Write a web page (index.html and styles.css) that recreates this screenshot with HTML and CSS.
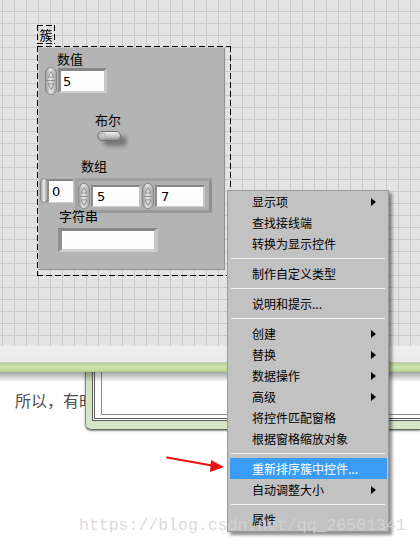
FILE: index.html
```html
<!DOCTYPE html>
<html lang="zh">
<head>
<meta charset="utf-8">
<title>LabVIEW 簇</title>
<link rel="stylesheet" href="styles.css">
</head>
<body>
<div class="front">
  <div class="cluster-label dashed">簇</div>
  <div class="cluster dashed">
    <div class="panel">
      <div class="lbl lbl-num">数值</div>
      <div class="spin spin-num"><svg viewBox="0 0 10 26" class="spin-ic"><polygon points="5,3.5 8,9.5 2,9.5" /><line x1="0.5" y1="13" x2="9.5" y2="13" /><polygon points="2,16.5 8,16.5 5,22.5" /></svg></div>
      <div class="numbox numbox-num"><span>5</span></div>

      <div class="lbl lbl-bool">布尔</div>
      <div class="toggle"><span class="knob"></span></div>

      <div class="lbl lbl-arr">数组</div>
      <div class="spin spin-idx"></div>
      <div class="numbox idxbox"><span>0</span></div>
      <div class="array">
        <div class="spin"><svg viewBox="0 0 10 26" class="spin-ic"><polygon points="5,3.5 8,9.5 2,9.5" /><line x1="0.5" y1="13" x2="9.5" y2="13" /><polygon points="2,16.5 8,16.5 5,22.5" /></svg></div>
        <div class="numbox elbox"><span>5</span></div>
        <div class="spin"><svg viewBox="0 0 10 26" class="spin-ic"><polygon points="5,3.5 8,9.5 2,9.5" /><line x1="0.5" y1="13" x2="9.5" y2="13" /><polygon points="2,16.5 8,16.5 5,22.5" /></svg></div>
        <div class="numbox elbox"><span>7</span></div>
      </div>

      <div class="lbl lbl-str">字符串</div>
      <div class="numbox strbox"></div>
    </div>
  </div>
</div>
<div class="strip"></div>
<div class="band"></div>
<div class="content">
  <div class="para">所以，有时候我们需要</div>
  <div class="dialog">
    <div class="dialog-frame">
      <div class="dialog-inner"></div>
    </div>
  </div>
</div>

<div class="menu">
  <div class="item"><span>显示项</span><span class="sub"></span></div>
  <div class="item"><span>查找接线端</span></div>
  <div class="item"><span>转换为显示控件</span></div>
  <div class="sep"></div>
  <div class="item"><span>制作自定义类型</span></div>
  <div class="sep"></div>
  <div class="item"><span>说明和提示...</span></div>
  <div class="sep"></div>
  <div class="item"><span>创建</span><span class="sub"></span></div>
  <div class="item"><span>替换</span><span class="sub"></span></div>
  <div class="item"><span>数据操作</span><span class="sub"></span></div>
  <div class="item"><span>高级</span><span class="sub"></span></div>
  <div class="item"><span>将控件匹配窗格</span></div>
  <div class="item"><span>根据窗格缩放对象</span></div>
  <div class="sep"></div>
  <div class="item active"><span>重新排序簇中控件...</span></div>
  <div class="item"><span>自动调整大小</span><span class="sub"></span></div>
  <div class="sep"></div>
  <div class="item"><span>属性</span></div>
</div>

<svg class="arrow" viewBox="0 0 70 30" width="70" height="30">
  <line x1="7" y1="7.5" x2="52" y2="15.5" stroke="#ee1111" stroke-width="2" stroke-linecap="round"/>
  <polygon points="64,17 51,10 50,22" fill="#ee1111"/>
</svg>

<div class="watermark">https://blog.csdn.net/qq_26501341</div>
</body>
</html>
```
FILE: styles.css
```css
html, body {
  margin: 0;
  padding: 0;
}
body {
  width: 420px;
  height: 546px;
  overflow: hidden;
  position: relative;
  background: #fff;
  font-family: "Noto Sans CJK SC", "Noto Sans", sans-serif;
}

/* front panel grid */
.front {
  height: 346px;
  position: relative;
  background-color: #e3e3e3;
  background-image:
    linear-gradient(to right, #c9c9c9 1px, transparent 1px),
    linear-gradient(to bottom, #c9c9c9 1px, transparent 1px);
  background-size: 12px 12px;
  background-position: 2px 11px;
}

.dashed {
  background:
    repeating-linear-gradient(90deg, #000 0 6px, transparent 6px 9px) 0 0 / 100% 1px no-repeat,
    repeating-linear-gradient(90deg, #000 0 6px, transparent 6px 9px) 0 100% / 100% 1px no-repeat,
    repeating-linear-gradient(180deg, #000 0 6px, transparent 6px 9px) 0 0 / 1px 100% no-repeat,
    repeating-linear-gradient(180deg, #000 0 6px, transparent 6px 9px) 100% 0 / 1px 100% no-repeat;
}

.cluster-label {
  position: absolute;
  left: 37px;
  top: 25px;
  width: 18px;
  height: 19px;
  font-size: 13px;
  line-height: 19px;
  text-align: center;
  color: #000;
}

.cluster {
  position: absolute;
  left: 37px;
  top: 46px;
  width: 194px;
  height: 230px;
}

.panel {
  margin: 1px 0 0 1px;
  width: 187px;
  height: 223px;
  box-sizing: border-box;
  position: relative;
  background: #b4b4b4;
  border: 1px solid;
  border-color: #cbcbcb #909090 #909090 #cbcbcb;
}

.lbl {
  position: absolute;
  font-size: 13px;
  line-height: 15px;
  color: #000;
  white-space: nowrap;
}
.lbl-num { left: 18px; top: 3px; }
.lbl-bool { left: 56px; top: 64px; }
.lbl-arr { left: 42px; top: 110px; }
.lbl-str { left: 20px; top: 160px; }

/* spinner (increment / decrement) */
.spin {
  width: 12px;
  height: 27px;
  box-sizing: border-box;
  border: 1px solid #8a8a8a;
  border-radius: 6px;
  background: linear-gradient(to right, #9e9e9e, #e9e9e9 45%, #c9c9c9 70%, #a3a3a3);
  position: relative;
  flex: none;
}
.spin-ic {
  display: block;
  width: 10px;
  height: 25px;
}
.spin-ic polygon {
  fill: #dedede;
  stroke: #7a7a7a;
  stroke-width: 0.8;
}
.spin-ic line {
  stroke: #8c8c8c;
  stroke-width: 1;
}
.spin-num {
  position: absolute;
  left: 6px;
  top: 19px;
  height: 28px;
}
.spin-idx {
  position: absolute;
  left: 1px;
  top: 130px;
  width: 8px;
  height: 25px;
  border-radius: 4px;
}

/* numeric / string boxes */
.numbox {
  box-sizing: border-box;
  background: #fdfdfd;
  border-style: solid;
  border-width: 3px 3px 2px 3px;
  border-color: #868686 #c6c6c6 #cfcfcf #8e8e8e;
  display: flex;
  align-items: center;
  font-family: "DejaVu Sans", "Liberation Sans", sans-serif;
  font-size: 13px;
  color: #000;
  padding-left: 2px;
  flex: none;
}
.numbox-num {
  position: absolute;
  left: 19px;
  top: 20px;
  width: 49px;
  height: 25px;
}
.idxbox {
  position: absolute;
  left: 8px;
  top: 131px;
  width: 27px;
  height: 24px;
  border-width: 2px 1px 1px 2px;
  padding-left: 3px;
}
.elbox {
  width: 50px;
  height: 22px;
  border-width: 2px 2px 1px 2px;
  padding-left: 4px;
}
.strbox {
  position: absolute;
  left: 19px;
  top: 180px;
  width: 100px;
  height: 24px;
  border-width: 3px 4px 3px 4px;
}

/* array shell */
.array {
  position: absolute;
  left: 36px;
  top: 130px;
  width: 137px;
  height: 35px;
  box-sizing: border-box;
  border: 3px solid;
  border-color: #a0a0a0 #8f8f8f #9a9a9a #a3a3a3;
  background: #b0b0b0;
  display: flex;
  align-items: center;
  gap: 1px;
}
.array .spin {
  height: 26px;
}

/* boolean toggle */
.toggle {
  position: absolute;
  left: 58px;
  top: 83px;
  width: 24px;
  height: 10px;
  box-sizing: border-box;
  border: 1px solid #6f6f6f;
  border-radius: 5px;
  background: linear-gradient(to bottom, #f2f2f2, #c9c9c9 50%, #8f8f8f);
  box-shadow: 6px 5px 4px rgba(0, 0, 0, 0.35);
}
.knob {
  position: absolute;
  left: 0;
  top: 0;
  width: 8px;
  height: 8px;
  border-radius: 50%;
  background: radial-gradient(circle at 60% 40%, #d8d8d8, #8a8a8a);
}

/* lower page */
.strip {
  height: 16px;
  background: linear-gradient(#efefef, #eaeaea);
  border-bottom: 1px solid #c6c6c6;
}
.band {
  height: 9px;
  background: linear-gradient(#b6d08a, #cfe3b1 45%, #c4dca0 75%, #b3cd88);
}
.content {
  position: relative;
  display: flex;
  height: 174px;
  background: #fff;
}
.content::after {
  content: "";
  position: absolute;
  left: 0;
  top: 0;
  right: 0;
  height: 10px;
  background: linear-gradient(rgba(0, 0, 0, 0.36), rgba(0, 0, 0, 0));
  pointer-events: none;
}
.para {
  width: 85px;
  flex: none;
  box-sizing: border-box;
  overflow: hidden;
  white-space: nowrap;
  padding: 19px 0 0 15px;
  font-size: 16px;
  line-height: 18px;
  color: #4d4d4d;
}
.dialog {
  flex: 1;
  height: 58px;
  box-sizing: border-box;
  border-left: 1px solid #7f8c76;
  border-bottom: 1px solid #5f665a;
  border-bottom-left-radius: 6px;
  background: linear-gradient(to bottom, #d2e1bd, #d9e6c9);
  padding: 0 0 8px 6px;
  box-shadow: 0 1px 2px rgba(0, 0, 0, 0.45);
}
.dialog-frame {
  height: 100%;
  box-sizing: border-box;
  border-left: 3px double #5a5a5a;
  border-bottom: 3px double #5a5a5a;
  background: #fff;
  padding: 0 0 3px 6px;
}
.dialog-inner {
  height: 100%;
  box-sizing: border-box;
  border-left: 1px solid #8a8a8a;
  border-bottom: 1px solid #8a8a8a;
}

/* context menu */
.menu {
  position: absolute;
  left: 227px;
  top: 190px;
  width: 162px;
  box-sizing: border-box;
  padding: 0 1px 1px 2px;
  background: #c2c2c2;
  border: 1px solid #9a9a9a;
  box-shadow: 3px 3px 3px rgba(0, 0, 0, 0.45);
  z-index: 3;
  font-size: 12px;
  color: #000;
}
.item {
  height: 21px;
  display: flex;
  align-items: center;
  justify-content: space-between;
  padding: 0 11px 0 22px;
  white-space: nowrap;
}
.item.active {
  background: #3b9cf5;
  color: #fff;
}
.sub {
  width: 0;
  height: 0;
  border-top: 4px solid transparent;
  border-bottom: 4px solid transparent;
  border-left: 5px solid #000;
}
.sep {
  height: 1px;
  margin: 4px 2px 4px 1px;
  background: #f3f3f3;
}

.arrow {
  position: absolute;
  left: 160px;
  top: 450px;
  z-index: 4;
}

.watermark {
  position: absolute;
  left: 79px;
  top: 518px;
  z-index: 5;
  font-family: "Liberation Mono", "DejaVu Sans Mono", monospace;
  font-size: 16.5px;
  line-height: 16.5px;
  color: rgba(212, 212, 212, 0.85);
  white-space: nowrap;
  pointer-events: none;
}
```
